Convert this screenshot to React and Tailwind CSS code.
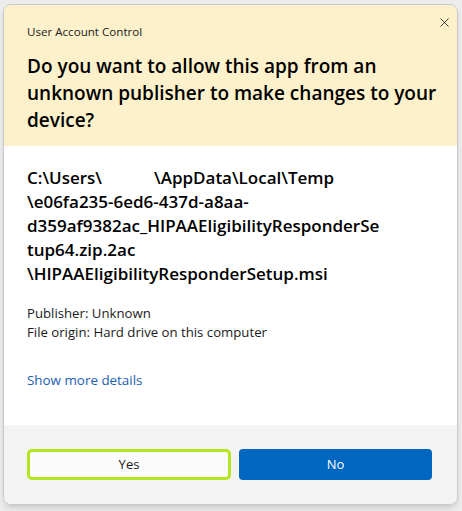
import { X } from "lucide-react";

const FONT = { fontFamily: '"Open Sans", "Noto Sans", sans-serif' };

const TITLE_LINES = [
  "Do you want to allow this app from an",
  "unknown publisher to make changes to your",
  "device?",
];

const PATH_LINES = [
  null,
  "\\e06fa235-6ed6-437d-a8aa-",
  "d359af9382ac_HIPAAEligibilityResponderSe",
  "tup64.zip.2ac",
  "\\HIPAAEligibilityResponderSetup.msi",
];

export default function App() {
  return (
    <div className="h-[511px] w-[462px] bg-[#ececec] p-[3px] pt-[4px]" style={FONT}>
      <div className="flex h-[501px] w-[455px] flex-col overflow-hidden rounded-lg border border-[#c9c9c9] shadow-md">
        {/* header */}
        <div className="relative h-[141px] bg-[#fdf1cc] px-[23px] pt-[18px]">
          <div className="text-[11.6px] text-[#1a1a1a]">User Account Control</div>
          <h1 className="mt-[13px] whitespace-nowrap text-[19px] font-semibold leading-[27px] text-black">
            {TITLE_LINES.map((l) => (
              <div key={l}>{l}</div>
            ))}
          </h1>
          <button className="absolute right-[1px] top-[5px] flex h-6 w-6 items-center justify-center text-[#222]">
            <X className="h-[15px] w-[15px]" strokeWidth={1.4} />
          </button>
        </div>

        {/* body */}
        <div className="h-[279px] bg-white px-[23px] pt-[20px]">
          <div className="text-[17px] font-semibold leading-[24px] text-black">
            {PATH_LINES.map((line, i) =>
              line === null ? (
                <div key={i}>
                  C:\Users\<span className="inline-block w-[52px]" />\AppData\Local\Temp
                </div>
              ) : (
                <div key={i}>{line}</div>
              )
            )}
          </div>
          <div className="mt-[18px] text-[13.2px] leading-[19px] text-[#1a1a1a]">
            <div>Publisher: Unknown</div>
            <div>File origin: Hard drive on this computer</div>
          </div>
          <a className="mt-[28px] block text-[13.4px] text-[#1b5eb0]">Show more details</a>
        </div>

        {/* footer */}
        <div className="flex flex-1 gap-2 bg-[#f3f3f3] px-[23px] pt-[24px]">
          <button className="h-[31px] w-[204px] rounded-[5px] border-[3px] border-[#b5e61d] bg-[#fbfbfb] text-[13px] text-[#1a1a1a]">
            Yes
          </button>
          <button className="h-[31px] w-[193px] rounded-[4px] bg-[#0067c0] text-[13px] text-white">
            No
          </button>
        </div>
      </div>
    </div>
  );
}
